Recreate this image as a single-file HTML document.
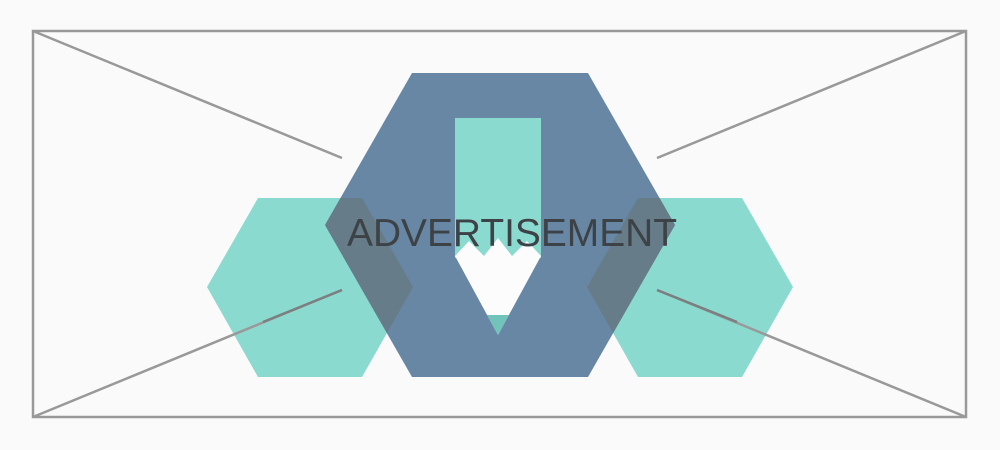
<!DOCTYPE html>
<html><head><style>
html,body{margin:0;padding:0;background:#fafafa;width:1000px;height:450px;overflow:hidden}
</style></head><body>
<svg width="1000" height="450" xmlns="http://www.w3.org/2000/svg">
<rect x="0" y="0" width="1000" height="450" fill="#fafafa"/>
<polygon points="258,198 362,198 413,287 362,377 258,377 207,287" fill="#8bdad0"/>
<polygon points="638,198 742,198 793,287 742,377 638,377 587,287" fill="#8bdad0"/>
<rect x="33" y="31" width="933" height="386" fill="none" stroke="#999" stroke-width="2.5"/>
<g stroke="#999" stroke-width="2.5">
<line x1="33" y1="31" x2="342" y2="158"/>
<line x1="33" y1="417" x2="342" y2="290"/>
<line x1="966" y1="31" x2="657" y2="158"/>
<line x1="966" y1="417" x2="657" y2="290"/>
</g>
<g stroke="#7a7f80" stroke-width="2.5">
<line x1="263" y1="322" x2="342" y2="290"/>
<line x1="737" y1="322" x2="657" y2="290"/>
</g>
<polygon points="412,73 588,73 675,225 588,377 412,377 325,225" fill="#6787a4"/>
<polygon points="340.5,198 362,198 413,287 386.9,333 325,225" fill="#677c89"/>
<polygon points="659.5,198 638,198 587,287 613.1,333 675,225" fill="#677c89"/>
<rect x="455" y="118" width="86" height="140" fill="#8bdad0"/>
<polygon points="455,256 469,241 484,256 498,238 512,256 527,241 541,256 498,335" fill="#fcfcfc"/>
<polygon points="487,315 509,315 498,335" fill="#72c4ba"/>
<text x="347" y="246" font-family="Liberation Sans, sans-serif" font-size="39" fill="#3d4246" textLength="330" lengthAdjust="spacingAndGlyphs">ADVERTISEMENT</text>
</svg>
</body></html>
